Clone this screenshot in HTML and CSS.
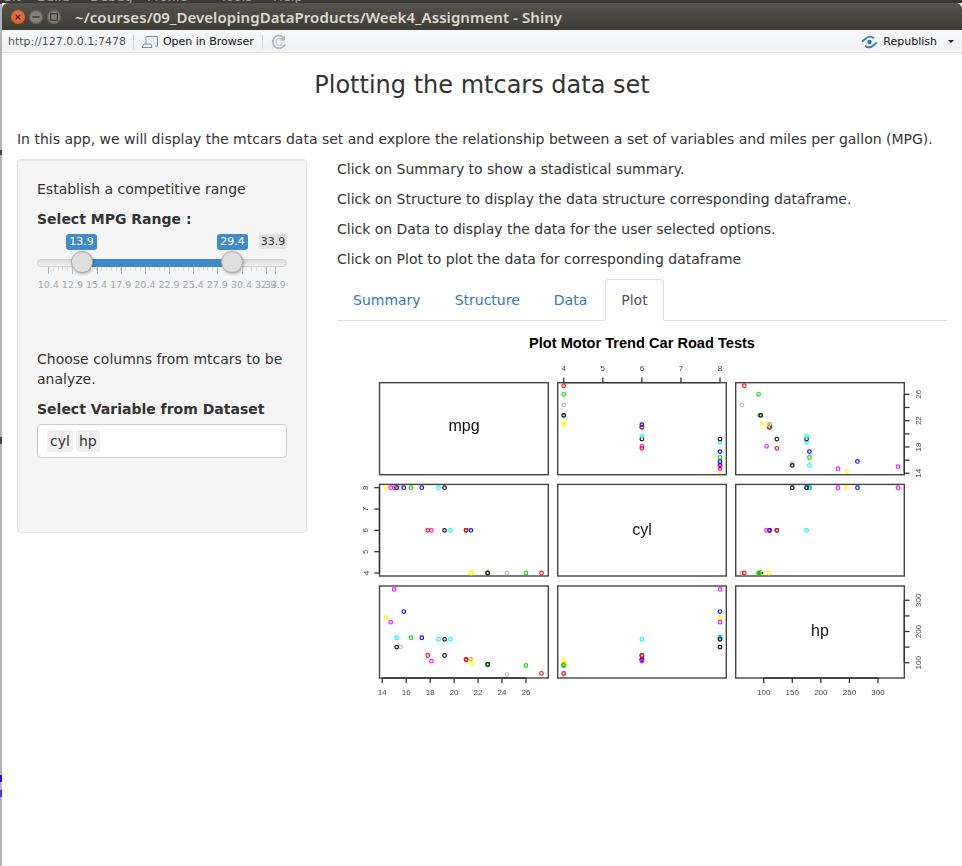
FILE: index.html
```html
<!DOCTYPE html>
<html lang="en">
<head>
<meta charset="utf-8">
<title>Shiny</title>
<link rel="stylesheet" href="styles.css">
</head>
<body>
<div class="desk-menu">
  <span class="m1">Git</span><span class="m2">Build</span><span class="m3">Debug</span><span class="m4">Profile</span><span class="m5">Tools</span><span class="m6">Help</span>
</div>
<i class="mark mark-a"></i><i class="mark mark-b"></i><i class="mark mark-c"></i><i class="mark mark-d"></i>
<div class="window">
  <header class="titlebar">
    <span class="wbtn wclose"><svg viewBox="0 0 14 14" width="14" height="14"><path d="M4.7 4.7l4.6 4.6M9.3 4.7l-4.6 4.6" stroke="#4a2415" stroke-width="1.4" fill="none"/></svg></span>
    <span class="wbtn wmin"><svg viewBox="0 0 14 14" width="14" height="14"><path d="M3.5 7h7" stroke="#35342f" stroke-width="1.4" fill="none"/></svg></span>
    <span class="wbtn wmax"><svg viewBox="0 0 14 14" width="14" height="14"><rect x="3.7" y="3.7" width="6.6" height="6.6" stroke="#35342f" stroke-width="1.2" fill="none"/></svg></span>
    <span class="wtitle">~/courses/09_DevelopingDataProducts/Week4_Assignment - Shiny</span>
  </header>
  <div class="toolbar">
    <span class="url">http://127.0.0.1:7478</span>
    <span class="tdiv tdiv-first"></span>
    <svg class="ic-open" viewBox="0 0 18 14" width="18" height="14"><path d="M5 1.5h11.5v9.5H14" fill="#e9eef5" stroke="#7c8da3"/><path d="M5 1.5v8M1 12.5h10l-1-3.5H3z" fill="#f7f9fb" stroke="#7c8da3"/></svg>
    <span class="open">Open in Browser</span>
    <span class="tdiv"></span>
    <svg class="ic-refresh" viewBox="0 0 16 16" width="16" height="16"><path d="M12.6 3.6A6.3 6.3 0 1 0 14 10" fill="none" stroke="#a9b8cb" stroke-width="1.7"/><path d="M11.6 6.2A3.5 3.5 0 1 0 11.7 9.6" fill="none" stroke="#c4cfdc" stroke-width="1.3"/><path d="M8.6 6.4h5.4V1.6z" fill="#a9b8cb"/></svg>
    <span class="grow"></span>
    <svg class="ic-pub" viewBox="0 0 17 14" width="17" height="14"><path d="M1 6.5C4 5 5 1.6 9 1.6c1.8 0 3 .7 3.8 1.8" fill="none" stroke="#3f78b8" stroke-width="1.9"/><path d="M16 7.5c-3 1.5-4 4.9-8 4.9-1.8 0-3-.7-3.8-1.8" fill="none" stroke="#3f78b8" stroke-width="1.9"/><circle cx="8.5" cy="7" r="2.2" fill="#2f6db5"/></svg>
    <span class="pub">Republish</span>
    <span class="caret"></span>
  </div>
  <main class="page">
    <h2 class="apptitle">Plotting the mtcars data set</h2>
    <p class="intro">In this app, we will display the mtcars data set and explore the relationship between a set of variables and miles per gallon (MPG).</p>
    <div class="cols">
      <aside class="well">
        <p class="txt">Establish a competitive range</p>
        <label class="lbl">Select MPG Range :</label>
        <div class="slider">
          <span class="tag tag-from">13.9</span>
          <span class="tag tag-to">29.4</span>
          <span class="tag-max">33.9</span>
          <div class="track"><div class="bar"></div></div>
          <span class="handle handle-from"></span>
          <span class="handle handle-to"></span>
          <div class="minor"></div>
          <i class="tk" style="left:11.3px"></i><b class="tl" style="left:11.3px">10.4</b>
          <i class="tk" style="left:35.45px"></i><b class="tl" style="left:35.45px">12.9</b>
          <i class="tk" style="left:59.6px"></i><b class="tl" style="left:59.6px">15.4</b>
          <i class="tk" style="left:83.75px"></i><b class="tl" style="left:83.75px">17.9</b>
          <i class="tk" style="left:107.9px"></i><b class="tl" style="left:107.9px">20.4</b>
          <i class="tk" style="left:132.05px"></i><b class="tl" style="left:132.05px">22.9</b>
          <i class="tk" style="left:156.2px"></i><b class="tl" style="left:156.2px">25.4</b>
          <i class="tk" style="left:180.35px"></i><b class="tl" style="left:180.35px">27.9</b>
          <i class="tk" style="left:204.5px"></i><b class="tl" style="left:204.5px">30.4</b>
          <i class="tk" style="left:228.65px"></i><b class="tl" style="left:228.65px">32.9</b>
          <i class="tk" style="left:238.3px"></i><b class="tl" style="left:238.3px">33.9</b>
        </div>
        <p class="txt">Choose columns from mtcars to be analyze.</p>
        <label class="lbl">Select Variable from Dataset</label>
        <div class="selectbox"><span class="chip">cyl</span><span class="chip">hp</span></div>
      </aside>
      <section class="content">
        <p class="line">Click on Summary to show a stadistical summary.</p>
        <p class="line">Click on Structure to display the data structure corresponding dataframe.</p>
        <p class="line">Click on Data to display the data for the user selected options.</p>
        <p class="line">Click on Plot to plot the data for corresponding dataframe</p>
        <nav class="tabs">
          <a class="tab">Summary</a><a class="tab">Structure</a><a class="tab">Data</a><a class="tab active">Plot</a>
        </nav>
        <svg id="plot" class="plot" viewBox="337 325 610 385" width="610" height="385">
          <text class="ptitle" x="642" y="347.5" text-anchor="middle">Plot Motor Trend Car Road Tests</text>
          <g class="soft">
            <text class="pname" x="464" y="431" text-anchor="middle">mpg</text>
            <text class="pname" x="642" y="535" text-anchor="middle">cyl</text>
            <text class="pname" x="820" y="636" text-anchor="middle">hp</text>
            <g id="axes"></g>
            <g id="points"></g>
          </g>
        </svg>
      </section>
    </div>
  </main>
</div>
<script src="plot.js"></script>
</body>
</html>
```

FILE: styles.css
```css
* { box-sizing: border-box; }
html, body { margin: 0; height: 100%; }
body {
  background: #b2b2b2;
  font-family: "DejaVu Sans", sans-serif;
  font-size: 14px;
  line-height: 20px;
  color: #333;
  overflow: hidden;
  padding: 3px 0 0 2px;
  position: relative;
}
.desk-menu {
  position: absolute; left: 0; top: 0; width: 100%; height: 4px;
  background: #3a3936; overflow: hidden; color: #a5a5a0;
  font-size: 13px; line-height: 1;
}
.desk-menu span { position: absolute; top: -10px; }
.m1 { left: 2px; } .m2 { left: 37px; } .m3 { left: 90px; }
.m4 { left: 147px; } .m5 { left: 220px; } .m6 { left: 273px; }
.mark { position: absolute; left: 0; width: 2px; }
.mark-a { top: 775px; height: 7px; background: #1414d8; }
.mark-b { top: 790px; height: 7px; background: #3a3ad0; }
.mark-c { top: 150px; height: 5px; background: #444; }
.mark-d { top: 437px; height: 7px; background: #444; }
.window {
  position: relative; height: 100%; background: #fff;
  display: flex; flex-direction: column;
}
.titlebar {
  height: 27px; flex: none; display: flex; align-items: center;
  background: linear-gradient(#55534c, #3d3c36);
  border-radius: 6px 6px 0 0; padding: 0 0 0 9px;
}
.wbtn {
  width: 14px; height: 14px; border-radius: 50%; margin-right: 4px;
  background: #84827a; box-shadow: inset 0 0 0 1px #5d5b54;
  display: flex;
}
.wclose { background: radial-gradient(circle at 50% 35%, #f0794a, #d94f1e); box-shadow: none; }
.wtitle {
  margin-left: 10px; color: #dedad0; font-family: "Noto Sans", sans-serif;
  font-weight: 600; font-size: 15px; letter-spacing: .07px; white-space: nowrap;
}
.toolbar {
  height: 23px; flex: none; display: flex; align-items: center; padding-top: 1px;
  background: linear-gradient(#f8f9fa, #f0f1f3);
  border-bottom: 1px solid #dfe1e6; font-size: 11px; color: #111;
}
.url { margin-left: 6px; color: #555; }
.tdiv { width: 1px; height: 14px; background: #cfd2d6; margin: 0 8px; }
.tdiv-first { margin: 0 7px; }
.ic-open { margin-right: 4px; }
.ic-refresh { margin-left: 0; }
.grow { flex: 1; }
.ic-pub { margin-right: 5px; }
.pub { margin-right: 11px; }
.caret {
  width: 0; height: 0; margin-right: 8px;
  border-left: 3px solid transparent; border-right: 3px solid transparent;
  border-top: 3px solid #222;
}
.page { padding: 0 15px; }
.apptitle {
  margin: 17px 0 0; font-size: 24px; line-height: 30px; font-weight: 400;
  text-align: center; color: #333; height: 30px;
}
.intro { margin: 29px 0 0; white-space: nowrap; letter-spacing: -.008px; }
.cols { display: flex; margin-top: 10px; gap: 30px; align-items: flex-start; }
.well {
  width: 290px; flex: none; background: #f5f5f5; border: 1px solid #e3e3e3;
  border-radius: 4px; padding: 19px; box-shadow: inset 0 1px 1px rgba(0,0,0,.05);
}
.txt { margin: 0 0 10px; }
.lbl { display: block; font-weight: 700; margin-bottom: 5px; }
.slider { position: relative; height: 120px; margin-top: -5px; }
.tag, .tag-max {
  position: absolute; top: 5px; height: 16px; line-height: 16px; font-size: 11px;
  text-align: center; border-radius: 3px;
}
.tag { background: #428bca; color: #fff; width: 31px; }
.tag-from { left: 29px; }
.tag-to { left: 180px; }
.tag-max { left: 222px; width: 28px; background: #e1e1e1; color: #333; top: 5px; height: 15px; line-height: 15px; }
.track {
  position: absolute; left: 0; top: 30px; width: 250px; height: 8px;
  background: linear-gradient(#dcdcdc, #f0f0f0); border: 1px solid #cfcfcf; border-radius: 4px;
}
.bar { position: absolute; left: 45px; width: 150px; top: -1px; height: 8px; background: #428bca; }
.handle {
  position: absolute; top: 22px; width: 22px; height: 22px; border-radius: 50%;
  background: #dedede; border: 1px solid #ababab; box-shadow: 1px 1px 3px rgba(0,0,0,.3);
}
.handle-from { left: 34px; }
.handle-to { left: 184px; }
.minor {
  position: absolute; left: 11px; top: 38px; width: 228px; height: 4px;
  background: repeating-linear-gradient(90deg, #dcdcdc 0 1px, transparent 1px 4.83px);
}
.tk { position: absolute; top: 38px; width: 1px; height: 7px; background: #9dbcd8; }
.tl {
  position: absolute; top: 50px; width: 30px; margin-left: -15px; text-align: center;
  font-size: 9.5px; font-weight: 400; line-height: 12px; color: #a3a9b0;
}
.selectbox {
  height: 34px; width: 250px; background: #fff; border: 1px solid #ccc; border-radius: 4px;
  padding: 5px 9px; display: flex; gap: 3px; margin-bottom: 55px;
}
.chip { background: #efefef; border-radius: 3px; padding: 1px 3px 0; height: 22px; line-height: 20px; }
.content { flex: 1; min-width: 0; }
.line { margin: 0 0 10px; white-space: nowrap; letter-spacing: -.012px; }
.tabs { display: flex; height: 42px; margin-top: 10px; border-bottom: 1px solid #ddd; }
.tab { padding: 10px 15px; height: 42px; margin: 0 2px 0 0; color: #337ab7; border: 1px solid transparent; border-radius: 4px 4px 0 0; }
.tab.active { color: #555; background: #fff; border-color: #ddd #ddd #fff; }
.plot { display: block; margin-top: 4px; }
.soft { filter: blur(.35px); }
.ptitle { font: 700 14.6px "Liberation Sans", sans-serif; fill: #000; }
.pname { font: 400 16px "Liberation Sans", sans-serif; fill: #111; }
.tick-label { font: 400 8px "Liberation Sans", sans-serif; fill: #444; }
```

FILE: plot.js
```js
(function () {
  var NS = 'http://www.w3.org/2000/svg';
  var C = { k: '#111111', r: '#ff1010', g: '#10d810', b: '#1010ff', c: '#00ffff', m: '#ff10ff', y: '#ffff00', a: '#bebebe' };
  var cars = [
    [21, 6, 110, 'k'], [21, 6, 110, 'r'], [22.8, 4, 93, 'g'], [21.4, 6, 110, 'b'], [18.7, 8, 175, 'c'],
    [18.1, 6, 105, 'm'], [14.3, 8, 245, 'y'], [24.4, 4, 62, 'a'], [22.8, 4, 95, 'k'], [19.2, 6, 123, 'k'],
    [17.8, 6, 123, 'r'], [16.4, 8, 180, 'g'], [17.3, 8, 180, 'b'], [15.2, 8, 180, 'c'], [14.7, 8, 230, 'm'],
    [21.5, 4, 97, 'y'], [15.5, 8, 150, 'a'], [15.2, 8, 150, 'k'], [19.2, 8, 175, 'k'], [27.3, 4, 66, 'r'],
    [26, 4, 91, 'g'], [15.8, 8, 264, 'b'], [19.7, 6, 175, 'c'], [15, 8, 335, 'm'], [21.4, 4, 109, 'y']
  ];
  var X = [
    function (v) { return 382.3 + (v - 14) * 11.97; },
    function (v) { return 563.7 + (v - 4) * 39.08; },
    function (v) { return 763.7 + (v - 100) * 0.5715; }
  ];
  var Y = [
    function (v) { return 473.3 - (v - 14) * 6.583; },
    function (v) { return 573 - (v - 4) * 21.33; },
    function (v) { return 662.7 - (v - 100) * 0.312; }
  ];
  var PX = [[379.5, 548.3], [557.7, 726.3], [735.7, 904.3]];
  var PY = [[382.7, 474.7], [484.4, 576], [586, 678]];
  var axes = document.getElementById('axes');
  var points = document.getElementById('points');

  function el(parent, name, attrs, text) {
    var n = document.createElementNS(NS, name);
    for (var k in attrs) n.setAttribute(k, attrs[k]);
    if (text !== undefined) n.textContent = text;
    parent.appendChild(n);
    return n;
  }
  function line(x1, y1, x2, y2) {
    el(axes, 'line', { x1: x1, y1: y1, x2: x2, y2: y2, stroke: '#333', 'stroke-width': 1.3 });
  }
  function hLabel(x, y, t) {
    el(axes, 'text', { x: x, y: y, 'text-anchor': 'middle', 'class': 'tick-label' }, t);
  }
  function vLabel(x, y, t) {
    el(axes, 'text', { x: x, y: y, 'text-anchor': 'middle', 'class': 'tick-label', transform: 'rotate(-90 ' + x + ' ' + y + ')' }, t);
  }

  PY.forEach(function (py) {
    PX.forEach(function (px) {
      el(axes, 'rect', { x: px[0], y: py[0], width: px[1] - px[0], height: py[1] - py[0], fill: 'none', stroke: '#444', 'stroke-width': 1.4 });
    });
  });

  line(X[1](4), 382.7, X[1](8), 382.7);
  [4, 5, 6, 7, 8].forEach(function (v) {
    line(X[1](v), 382.7, X[1](v), 377.5);
    hLabel(X[1](v), 371, v);
  });
  line(904.3, Y[0](14), 904.3, Y[0](26));
  [14, 16, 18, 20, 22, 24, 26].forEach(function (v) {
    line(904.3, Y[0](v), 909.5, Y[0](v));
    if ((v - 14) % 4 === 0) vLabel(921, Y[0](v), v);
  });
  line(379.5, Y[1](4), 379.5, Y[1](8));
  [4, 5, 6, 7, 8].forEach(function (v) {
    line(379.5, Y[1](v), 374.3, Y[1](v));
    vLabel(368.5, Y[1](v), v);
  });
  line(X[0](14), 678, X[0](26), 678);
  [14, 16, 18, 20, 22, 24, 26].forEach(function (v) {
    line(X[0](v), 678, X[0](v), 683);
    hLabel(X[0](v), 695, v);
  });
  line(X[2](100), 678, X[2](300), 678);
  [100, 150, 200, 250, 300].forEach(function (v) {
    line(X[2](v), 678, X[2](v), 683);
    hLabel(X[2](v), 695, v);
  });
  line(904.3, Y[2](100), 904.3, Y[2](300));
  [100, 150, 200, 250, 300].forEach(function (v) {
    line(904.3, Y[2](v), 909.5, Y[2](v));
    if (v % 100 === 0) vLabel(921, Y[2](v), v);
  });

  for (var row = 0; row < 3; row++) {
    for (var col = 0; col < 3; col++) {
      if (row === col) continue;
      cars.forEach(function (car) {
        el(points, 'circle', {
          cx: X[col](car[col]), cy: Y[row](car[row]), r: 1.8,
          fill: 'none', stroke: C[car[3]], 'stroke-width': 1.2
        });
      });
    }
  }
})();
```
